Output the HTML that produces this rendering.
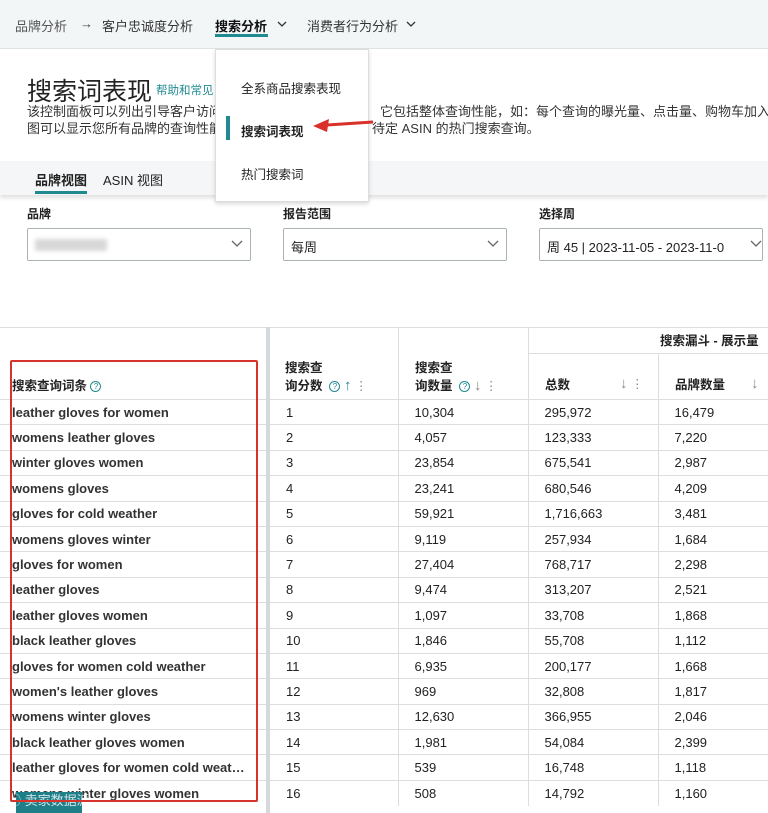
<!DOCTYPE html>
<html><head><meta charset="utf-8"><style>
*{box-sizing:border-box;margin:0;padding:0}
body{width:768px;height:813px;overflow:hidden;background:#fff;font-family:"Liberation Sans","Noto Sans CJK SC",sans-serif;color:#222;position:relative}
.nav{position:absolute;left:0;top:0;width:768px;height:49px;background:#f3f6f7;border-bottom:1px solid #dde3e5;font-size:13px;color:#333}
.nav span{position:absolute;top:16px}
.top{position:absolute;left:0;top:49px;width:768px;height:112px;background:#fff}
.tabs{position:absolute;left:0;top:161px;width:768px;height:34px;background:#f4f6f7;box-shadow:0 3px 4px rgba(0,0,0,.12)}
.lbl{position:absolute;top:205px;font-size:12px;font-weight:bold;color:#222}
.sel{position:absolute;top:228px;height:33px;border:1px solid #aab2b6;border-radius:2px;font-size:13px;padding:8px 7px;color:#222;background:#fff;white-space:nowrap;overflow:hidden}
.sel svg{position:absolute;right:7px;top:11px;background:#fff}
.menu{position:absolute;left:215px;top:49px;width:154px;height:153px;background:#fff;border:1px solid #ddd;box-shadow:0 2px 4px rgba(0,0,0,.15);font-size:12.5px;color:#222}
.menu div{position:absolute;left:25px}
table{position:absolute;left:0;border-collapse:collapse;font-size:13px;color:#222}
td{height:25.4px;border-top:1px solid #ddd;padding:0 0 0 12px;white-space:nowrap}
td.q{padding-left:12px;width:268px;font-weight:bold;color:#333;border-right:4px solid #d5d9dc;overflow:hidden}
td.c2,td.c3,td.c4{width:130px;padding-left:16px;border-right:1px solid #ddd}
td.c5{width:110px;padding-left:16px}
.hd{position:absolute;font-size:12.5px;font-weight:bold;color:#222;line-height:17px}
.q1{display:inline-block;width:11px;height:11px;border:1px solid #1f8a90;border-radius:50%;font-size:8px;line-height:9px;text-align:center;color:#1f8a90;font-weight:normal;vertical-align:middle}
.ar{color:#888;font-weight:normal}
</style></head><body>
<div class="nav">
<span style="left:15px;color:#555">品牌分析</span>
<span style="left:80px;color:#444">→</span>
<span style="left:102px">客户忠诚度分析</span>
<span style="left:215px;font-weight:bold;color:#111">搜索分析</span>
<div style="position:absolute;left:215px;top:34px;width:53px;height:3px;background:#1f8a90"></div>
<svg style="position:absolute;left:277px;top:21px" width="10" height="7"><path d="M1 1 L5 5 L9 1" fill="none" stroke="#333" stroke-width="1.3"/></svg>
<span style="left:307px">消费者行为分析</span>
<svg style="position:absolute;left:406px;top:21px" width="10" height="7"><path d="M1 1 L5 5 L9 1" fill="none" stroke="#333" stroke-width="1.3"/></svg>
</div>
<div class="top">
<div style="position:absolute;left:27px;top:23px;font-size:25px;color:#222">搜索词表现</div>
<div style="position:absolute;left:156px;top:33px;font-size:11.5px;color:#1f8a90">帮助和常见</div>
<div style="position:absolute;left:27px;top:54px;font-size:13px;color:#333;line-height:17px;white-space:nowrap">该控制面板可以列出引导客户访问<br>图可以显示您所有品牌的查询性能</div>
<div style="position:absolute;left:380px;top:54px;font-size:13px;color:#333;line-height:17px;white-space:nowrap">它包括整体查询性能，如：每个查询的曝光量、点击量、购物车加入</div>
<div style="position:absolute;left:372px;top:71px;font-size:13px;color:#333;line-height:17px;white-space:nowrap">待定 ASIN 的热门搜索查询。</div>
</div>
<div class="tabs">
<div style="position:absolute;left:35px;top:9px;font-size:13px;font-weight:bold">品牌视图</div>
<div style="position:absolute;left:35px;top:30px;width:52px;height:3px;background:#1f8a90"></div>
<div style="position:absolute;left:103px;top:9px;font-size:13px">ASIN 视图</div>
</div>
<div class="menu">
<div style="top:28px">全系商品搜索表现</div>
<div style="top:71px;font-weight:bold">搜索词表现</div>
<div style="left:10px;top:66px;width:4px;height:24px;background:#1f8a90"></div>
<div style="top:114px">热门搜索词</div>
</div>
<svg style="position:absolute;left:305px;top:114px" width="70" height="20"><path d="M68 8 L22 11" stroke="#d9302a" stroke-width="3"/><path d="M8 12 L24 5 L22 18 Z" fill="#d9302a"/></svg>
<div class="lbl" style="left:27px">品牌</div>
<div class="lbl" style="left:283px">报告范围</div>
<div class="lbl" style="left:539px">选择周</div>
<div class="sel" style="left:27px;width:224px"><span style="display:inline-block;width:72px;height:12px;background:#d8d8d8;filter:blur(2px);margin-top:2px"></span><svg width="12" height="8"><path d="M1 1 L6 6 L11 1" fill="none" stroke="#666" stroke-width="1.3"/></svg></div>
<div class="sel" style="left:283px;width:224px">每周<svg width="12" height="8"><path d="M1 1 L6 6 L11 1" fill="none" stroke="#666" stroke-width="1.3"/></svg></div>
<div class="sel" style="left:539px;width:224px">周 45 | 2023-11-05 - 2023-11-0<svg width="20" height="8" style="right:0;padding-left:4px"><path d="M5 1 L10 6 L15 1" fill="none" stroke="#666" stroke-width="1.3"/></svg></div>
<div style="position:absolute;left:0;top:327px;width:768px;border-top:1px solid #ddd"></div>
<div style="position:absolute;left:266px;top:327px;width:4px;height:486px;background:#d5d9dc"></div>
<div style="position:absolute;left:398px;top:327px;width:1px;height:73px;background:#ddd"></div>
<div style="position:absolute;left:528px;top:327px;width:1px;height:73px;background:#ddd"></div>
<div style="position:absolute;left:528px;top:353px;width:240px;height:1px;background:#ddd"></div>
<div style="position:absolute;left:658px;top:353px;width:1px;height:47px;background:#ddd"></div>
<div class="hd" style="left:660px;top:333px">搜索漏斗 - 展示量</div>
<div class="hd" style="left:12px;top:378px">搜索查询词条 <span class="q1">?</span></div>
<div class="hd" style="left:285px;top:360px">搜索查<br>询分数 &nbsp;<span class="q1">?</span> <span style="color:#1f8a90;font-weight:normal;font-size:15px">↑</span> <span class="ar">⋮</span></div>
<div class="hd" style="left:415px;top:360px">搜索查<br>询数量 &nbsp;<span class="q1">?</span> <span class="ar" style="font-size:15px">↓</span> <span class="ar">⋮</span></div>
<div class="hd" style="left:545px;top:377px">总数</div><div class="hd" style="left:620px;top:375px"><span class="ar" style="font-size:15px">↓</span> <span class="ar">⋮</span></div>
<div class="hd" style="left:675px;top:377px">品牌数量</div><div class="hd" style="left:751px;top:375px"><span class="ar" style="font-size:15px">↓</span></div>
<table style="top:399px">
<tr><td class="q">leather gloves for women</td><td class="c2">1</td><td class="c3">10,304</td><td class="c4">295,972</td><td class="c5">16,479</td></tr>
<tr><td class="q">womens leather gloves</td><td class="c2">2</td><td class="c3">4,057</td><td class="c4">123,333</td><td class="c5">7,220</td></tr>
<tr><td class="q">winter gloves women</td><td class="c2">3</td><td class="c3">23,854</td><td class="c4">675,541</td><td class="c5">2,987</td></tr>
<tr><td class="q">womens gloves</td><td class="c2">4</td><td class="c3">23,241</td><td class="c4">680,546</td><td class="c5">4,209</td></tr>
<tr><td class="q">gloves for cold weather</td><td class="c2">5</td><td class="c3">59,921</td><td class="c4">1,716,663</td><td class="c5">3,481</td></tr>
<tr><td class="q">womens gloves winter</td><td class="c2">6</td><td class="c3">9,119</td><td class="c4">257,934</td><td class="c5">1,684</td></tr>
<tr><td class="q">gloves for women</td><td class="c2">7</td><td class="c3">27,404</td><td class="c4">768,717</td><td class="c5">2,298</td></tr>
<tr><td class="q">leather gloves</td><td class="c2">8</td><td class="c3">9,474</td><td class="c4">313,207</td><td class="c5">2,521</td></tr>
<tr><td class="q">leather gloves women</td><td class="c2">9</td><td class="c3">1,097</td><td class="c4">33,708</td><td class="c5">1,868</td></tr>
<tr><td class="q">black leather gloves</td><td class="c2">10</td><td class="c3">1,846</td><td class="c4">55,708</td><td class="c5">1,112</td></tr>
<tr><td class="q">gloves for women cold weather</td><td class="c2">11</td><td class="c3">6,935</td><td class="c4">200,177</td><td class="c5">1,668</td></tr>
<tr><td class="q">women's leather gloves</td><td class="c2">12</td><td class="c3">969</td><td class="c4">32,808</td><td class="c5">1,817</td></tr>
<tr><td class="q">womens winter gloves</td><td class="c2">13</td><td class="c3">12,630</td><td class="c4">366,955</td><td class="c5">2,046</td></tr>
<tr><td class="q">black leather gloves women</td><td class="c2">14</td><td class="c3">1,981</td><td class="c4">54,084</td><td class="c5">2,399</td></tr>
<tr><td class="q">leather gloves for women cold weat…</td><td class="c2">15</td><td class="c3">539</td><td class="c4">16,748</td><td class="c5">1,118</td></tr>
<tr><td class="q">womens winter gloves women</td><td class="c2">16</td><td class="c3">508</td><td class="c4">14,792</td><td class="c5">1,160</td></tr>
</table>
<div style="position:absolute;left:16px;top:792px;width:66px;height:21px;background:#1f7f88"></div>
<div style="position:absolute;left:8px;top:790px;font-size:13px;color:rgba(255,255,255,.8)">ⓒ 卖家数据派</div>
<div style="position:absolute;left:10px;top:360px;width:248px;height:442px;border:2px solid #d6332c;border-radius:2px"></div>
</body></html>
